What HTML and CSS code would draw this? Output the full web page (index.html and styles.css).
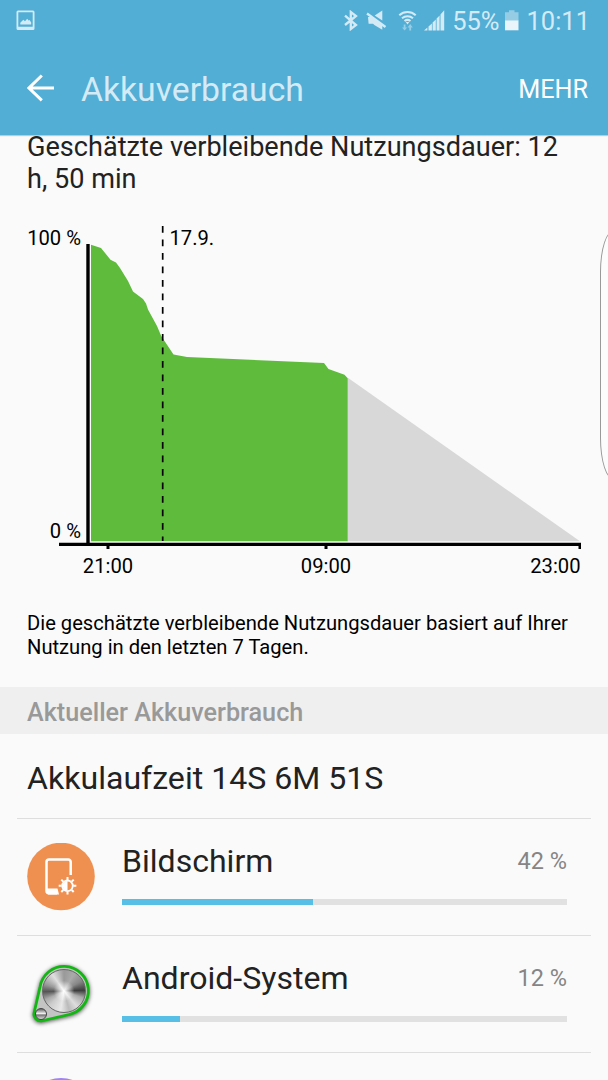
FILE: index.html
```
<!DOCTYPE html>
<html lang="de">
<head>
    <meta charset="UTF-8">
    <meta name="viewport" content="width=device-width, initial-scale=1">
    <title>Akkuverbrauch</title>
    <link rel="stylesheet" href="styles.css">
</head>
<body>
    <header class="header">
        <div class="status-bar">
            <svg class="icon-picture" width="20" height="21" viewBox="0 0 20 21">
                <path fill-rule="evenodd" d="M2 0.5h15a1.5 1.5 0 0 1 1.5 1.5v16.500a1.500 1.500 0 0 1-1.500 1.500h-15a1.500 1.500 0 0 1-1.500-1.500v-16.500a1.500 1.500 0 0 1 1.500-1.500zM2.300 2.200v14.500h14.400v-14.500z"/>
                <path d="M4.300 14.500v-1.800l3-2.900 1.700 1.500 2.200-2.600 1.400 1.800 1-.6 1.600 2.500v2.100z"/>
            </svg>
            <div class="status-icons">
                <svg width="14" height="21" viewBox="0 0 14 21">
                    <path class="line" d="M1 5.700L12 15 6.800 19V2L12 6 1 15"/>
                </svg>
                <svg class="icon-mute" width="21" height="21" viewBox="0 0 21 21">
                    <path d="M8.700 5.600L16.300 0.500v10zM2 7h3l11.300 8v4.800L8.700 15.300 7 13.800H2.600z"/>
                    <path class="line" d="M1 3.500l18.500 13.500"/>
                </svg>
                <svg class="icon-wifi" width="20" height="21" viewBox="0 0 20 21">
                    <path class="line thin" d="M1.300 5.200a12.300 12.300 0 0 1 16.400 0M4 8.200a8.500 8.500 0 0 1 11 0M6.500 11a5 5 0 0 1 6 0"/>
                    <path d="M7.700 12h3.600l-1.800 2.400z"/>
                    <path class="faint" d="M5.700 14.500h1.800v3h1.700l-2.600 3-2.600-3h1.700zM11.300 20.500v-3H9.600l2.600-3.500 2.600 3.500h-1.700v3z"/>
                </svg>
                <svg class="icon-signal" width="21" height="21" viewBox="0 0 21 21">
                    <path d="M0 20.400l3.400-3v3zM4.500 16.500l3.400-3v6.900H4.500zM8.600 12.500l3.200-2.900v10.800H8.600zM12.600 8.500l3-3v14.900h-3zM16.500 4.500l3.700-4.200v20.100h-3.700z"/>
                </svg>
                <span class="battery-level">55%</span>
                <svg class="icon-battery" width="14" height="21" viewBox="0 0 14 21">
                    <path class="faint" d="M0 2.300h4V.3h5.500v2h4v8H0z"/>
                    <path class="full" d="M0 10.300h13.500v10H0z"/>
                </svg>
                <span class="clock">10:11</span>
            </div>
        </div>
        <div class="action-bar">
            <svg class="back" width="28" height="28" viewBox="0 0 28 28">
                <path d="M14.800 1.500L2 14l12.800 12.300M2 14h25"/>
            </svg>
            <h1>Akkuverbrauch</h1>
            <button class="more">MEHR</button>
        </div>
    </header>

    <main class="content">
        <p class="remaining">Geschätzte verbleibende Nutzungsdauer: 12 h, 50 min</p>

        <svg class="chart" width="608" height="375" viewBox="0 215 608 375">
            <path class="forecast" d="M347.500 377.500L580 541.300H347.500z"/>
            <path class="usage" d="M91 244.800L101 248l9.500 11.700 5.500 2.800 4 5.500 8 13 5 10.500 10 7.500 3 4.500 2 6 9 16.500 4 9.500 1.500 2.500 11 16.500 13.500 2.500L324 363l4.500 6 16 5.700 3.200 3.500v163.100H91z"/>
            <path class="midnight" d="M162.700 226v315"/>
            <path class="axis" d="M86.300 244h3.400v299h-3.400zM59 542.700h522v3.200H59zM106.500 545h3v4h-3zM324.500 545h3v4h-3zM578.500 545h2.500v4h-2.500z"/>
            <text x="81" y="244.500" text-anchor="end">100 %</text>
            <text x="81" y="537.500" text-anchor="end">0 %</text>
            <text x="169.500" y="244.500">17.9.</text>
            <text x="108" y="573" text-anchor="middle">21:00</text>
            <text x="326" y="573" text-anchor="middle">09:00</text>
            <text x="580.500" y="573" text-anchor="end">23:00</text>
        </svg>

        <p class="note">Die geschätzte verbleibende Nutzungsdauer basiert auf Ihrer Nutzung in den letzten 7 Tagen.</p>

        <h2>Aktueller Akkuverbrauch</h2>
        <div class="runtime">Akkulaufzeit 14S 6M 51S</div>

        <ul class="apps">
            <li class="app">
                <svg class="app-icon" width="68" height="68" viewBox="0 0 68 68">
                    <circle cx="34" cy="33.500" r="33.800" fill="#f09050"/>
                    <path class="device" d="M43.700 32V19a2.500 2.500 0 0 0-2.500-2.500H22a2.500 2.500 0 0 0-2.500 2.500v28.700a2.500 2.500 0 0 0 2.500 2.500h8"/>
                    <path d="M19 45.500h11.500l1.500 6H21z" fill="#fff"/>
                    <circle cx="40.500" cy="42.800" r="5.300" fill="#f09050" stroke="#fff" stroke-width="1.800"/>
                    <path d="M40.500 38a4.800 4.800 0 0 0 0 9.600z" fill="#fff"/>
                    <path class="rays" d="M40.500 34v3M40.500 48.600v3M31.700 42.800h3M46.300 42.800h3M34.300 36.600l2 2M44.700 47l2 2M34.300 49l2-2M44.700 38.600l2-2"/>
                </svg>
                <div class="app-info">
                    <div class="app-row">
                        <span class="app-name">Bildschirm</span>
                        <span class="app-percent">42 %</span>
                    </div>
                    <div class="bar"><div class="bar-fill" style="width: 43%"></div></div>
                </div>
            </li>
            <li class="app">
                <div class="app-icon knob">
                    <svg width="68" height="68" viewBox="0 0 68 68">
                        <path class="belt" d="M13 26A24.300 24.300 0 1 1 42 53.500L16 59.500a6.800 6.800 0 0 1-8.700-8.500z"/>
                    </svg>
                    <span class="dial"></span>
                    <span class="dial small"></span>
                </div>
                <div class="app-info">
                    <div class="app-row">
                        <span class="app-name">Android-System</span>
                        <span class="app-percent">12 %</span>
                    </div>
                    <div class="bar"><div class="bar-fill" style="width: 13%"></div></div>
                </div>
            </li>
            <li class="app">
                <svg class="app-icon" width="68" height="68" viewBox="0 0 68 68">
                    <circle cx="34" cy="34.700" r="33.800" fill="#9b84f5"/>
                </svg>
            </li>
        </ul>
    </main>

    <div class="edge-handle"></div>
</body>
</html>
```
FILE: styles.css
```
* {
    box-sizing: border-box;
}
body {
    margin: 0;
    height: 1080px;
    overflow: hidden;
    font-family: Roboto, sans-serif;
    background: #fafafa;
    color: #222;
}
svg {
    display: block;
    flex: none;
}
.header {
    height: 135px;
    background: #52aed5;
    box-shadow: 0 1px 1px rgba(0, 0, 0, 0.2);
}
.status-bar {
    display: flex;
    justify-content: space-between;
    align-items: center;
    height: 40px;
    padding: 0 18px 0 16px;
    color: #d4ebf5;
    fill: #d4ebf5;
}
.status-icons {
    display: flex;
    align-items: center;
    font-size: 25.500px;
}
.status-icons .line {
    fill: none;
    stroke: #d4ebf5;
    stroke-width: 2.300;
}
.status-icons .thin {
    stroke-width: 2;
}
.status-icons .faint {
    fill: #96cde5;
}
.status-icons .full {
    fill: #e9f5fa;
}
.icon-mute {
    margin-left: 8px;
}
.icon-wifi {
    margin-left: 11px;
}
.icon-signal {
    margin-left: 6px;
}
.battery-level {
    margin-left: 7px;
}
.icon-battery {
    margin-left: 6px;
}
.clock {
    margin-left: 7px;
}
.status-icons span {
    line-height: 40px;
    padding-top: 2px;
}
.action-bar {
    display: flex;
    align-items: center;
    height: 95px;
    padding: 0 20px 0 26px;
}
.back {
    margin-left: 1px;
    fill: none;
    stroke: #fff;
    stroke-width: 3;
}
h1 {
    flex: 1;
    margin: 4px 0 0 26px;
    font-size: 33.700px;
    font-weight: 400;
    color: #d4ebf5;
}
.more {
    padding: 3px 0 0;
    border: none;
    background: none;
    font-family: inherit;
    font-size: 25.200px;
    color: #fff;
}
.content {
    height: 949px;
    margin-top: -4px;
    padding-top: 1px;
    overflow: hidden;
}
.remaining {
    margin: 0 27px 20px;
    font-size: 27.100px;
    line-height: 31.500px;
}
.chart text {
    font-size: 20.200px;
    fill: #000;
}
.usage {
    fill: #5ebb3c;
}
.forecast {
    fill: #d8d8d8;
}
.midnight {
    stroke: #000;
    stroke-width: 1.700;
    stroke-dasharray: 6.800 6.700;
}
.note {
    margin: 21px 27px 28px;
    font-size: 20.170px;
    line-height: 24px;
    color: #000;
}
h2 {
    margin: 0;
    padding: 2px 27px 0;
    height: 47px;
    line-height: 47px;
    font-size: 25.200px;
    font-weight: 500;
    color: #999;
    background: #efefef;
}
.runtime {
    height: 84px;
    padding: 0 27px;
    font-size: 32.100px;
    line-height: 88px;
}
.apps {
    margin: 0 17px;
    padding: 0;
    list-style: none;
}
.app {
    display: flex;
    height: 117px;
    padding: 0 24px 0 10px;
    border-top: 1px solid #dedede;
}
.app-icon {
    margin-top: 24px;
}
.device {
    fill: none;
    stroke: #fff;
    stroke-width: 2.500;
}
.rays {
    stroke: #fff;
    stroke-width: 2;
}
.app-info {
    flex: 1;
    margin-left: 27px;
}
.app-row {
    display: flex;
    justify-content: space-between;
    height: 80px;
    line-height: 84px;
}
.app-name {
    font-size: 32.050px;
}
.app-percent {
    font-size: 23.500px;
    color: #858585;
}
.bar {
    height: 6px;
    background: #e1e1e1;
}
.bar-fill {
    height: 6px;
    background: #57bfe5;
}
.knob {
    position: relative;
    width: 68px;
    height: 68px;
    margin-top: 25px;
}
.belt {
    fill: #c4c4c4;
    stroke: #12b812;
    stroke-width: 2.800;
    filter: drop-shadow(0 1px 2px rgba(0, 0, 0, 0.7));
}
.dial {
    position: absolute;
    left: 15px;
    top: 8px;
    width: 44px;
    height: 44px;
    border: 1px solid #666;
    border-radius: 50%;
    background: radial-gradient(#fff, rgba(255, 255, 255, 0) 35%), conic-gradient(#999, #aaa 30deg, #888 60deg, #3c3c3c 88deg, #aaa 110deg, #ddd 140deg, #bbb 165deg, #e8e8e8 190deg, #ccc 225deg, #aaa 245deg, #555 268deg, #999 290deg, #e0e0e0 325deg, #999);
}
.dial.small {
    left: 8px;
    top: 47px;
    width: 12px;
    height: 12px;
    border-color: #444;
    background: linear-gradient(#666, #eee 45%, #777 60%, #ddd);
}
.edge-handle {
    position: absolute;
    right: -20px;
    top: 230px;
    width: 28px;
    height: 250px;
    border: 1px solid #999;
    border-radius: 20px / 60px;
    background: #fcfcfc;
}
```
